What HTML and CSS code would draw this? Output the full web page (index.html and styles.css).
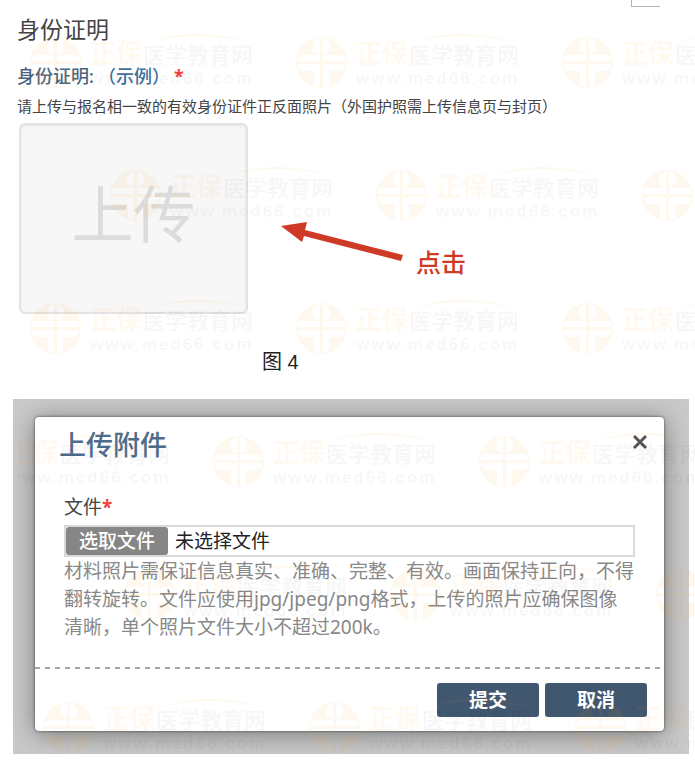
FILE: index.html
```
<!DOCTYPE html>
<html lang="zh-CN">
<head>
    <meta charset="UTF-8">
    <meta name="viewport" content="width=device-width, initial-scale=1.0">
    <title>身份证明</title>
    <link rel="stylesheet" href="styles.css">
</head>
<body>
    <!-- 水印图形 -->
    <svg class="defs" width="0" height="0" aria-hidden="true">
        <symbol id="mark" viewBox="0 0 266 60">
            <path class="mark-orange" fill-rule="evenodd" d="M25.500 5a25.500 25.500 0 1 0 0 51a25.500 25.500 0 1 0 0-51z
                M24 6C19 7 17 11 17 15c0 4 3 7 7 7z
                M27 6c5 1 7 5 7 9c0 4-3 7-7 7z
                M5 23H24v6H1c0-3 1-5 4-6z
                M46 23H27v6h23c0-3-1-5-4-6z
                M2 32H24v23c-4 0-6-1-6-3V39H7c-3 0-5-3-5-7z
                M49 32H27v23c4 0 6-1 6-3V39h11c3 0 5-3 5-7z"/>
            <path class="mark-orange" d="M114 11Q164-7 222 11Q164-3 114 11z"/>
            <text class="mark-orange mark-brand" x="60" y="31">正保</text>
            <text class="mark-grey mark-name" x="113" y="31">医学教育网</text>
            <text class="mark-grey mark-url" x="60" y="52">www.med66.com</text>
        </symbol>
    </svg>

    <section class="identity">
        <span class="crop-corner"></span>
        <h1>身份证明</h1>
        <p class="field-name">身份证明: <a href="#">（示例）</a> <b class="required">*</b></p>
        <p class="hint">请上传与报名相一致的有效身份证件正反面照片（外国护照需上传信息页与封页）</p>
        <div class="upload-row">
            <button type="button" class="upload-box">上传</button>
            <svg class="arrow" width="124" height="42" viewBox="0 0 124 42" aria-hidden="true">
                <path d="M1 6L27 2L25 10L123 35L121 41L24 16L22 22z"/>
            </svg>
            <span class="click-note">点击</span>
        </div>
        <p class="caption">图 4</p>

        <div class="watermark" aria-hidden="true">
            <div class="marks marks-a"><svg><use href="#mark"/></svg><svg><use href="#mark"/></svg><svg><use href="#mark"/></svg></div>
            <div class="marks marks-b"><svg><use href="#mark"/></svg><svg><use href="#mark"/></svg><svg><use href="#mark"/></svg></div>
            <div class="marks marks-a"><svg><use href="#mark"/></svg><svg><use href="#mark"/></svg><svg><use href="#mark"/></svg></div>
        </div>
    </section>

    <section class="attachment">
        <div class="backdrop">
            <form class="dialog">
                <div class="dialog-head">
                    <h2>上传附件</h2>
                    <button type="button" class="close" aria-label="关闭">
                        <svg width="16" height="16" viewBox="0 0 16 16"><path d="M2 2L14 14M14 2L2 14"/></svg>
                    </button>
                </div>
                <div class="dialog-body">
                    <label class="file-label" for="file">文件<b class="required">*</b></label>
                    <div class="file-field">
                        <button type="button" class="pick" onclick="document.getElementById('file').click()">选取文件</button>
                        <span>未选择文件</span>
                        <input type="file" id="file" accept=".jpg,.jpeg,.png" hidden>
                    </div>
                    <p class="help">材料照片需保证信息真实、准确、完整、有效。画面保持正向，不得<br>翻转旋转。文件应使用jpg/jpeg/png格式，上传的照片应确保图像<br>清晰，单个照片文件大小不超过200k。</p>
                </div>
                <div class="dialog-foot">
                    <button type="button">提交</button>
                    <button type="button">取消</button>
                </div>
            </form>
        </div>

        <div class="watermark" aria-hidden="true">
            <div class="marks marks-c"><svg><use href="#mark"/></svg><svg><use href="#mark"/></svg><svg><use href="#mark"/></svg></div>
            <div class="marks marks-d"><svg><use href="#mark"/></svg><svg><use href="#mark"/></svg><svg><use href="#mark"/></svg></div>
            <div class="marks marks-e"><svg><use href="#mark"/></svg><svg><use href="#mark"/></svg><svg><use href="#mark"/></svg></div>
        </div>
    </section>
</body>
</html>
```
FILE: styles.css
```
* {
    box-sizing: border-box;
}
body {
    font-family: "Noto Sans", "Noto Sans CJK SC", sans-serif;
    margin: 0;
    background-color: #fff;
    color: #444;
}
h1, h2, p {
    margin: 0;
    font-weight: normal;
}
button {
    font-family: inherit;
    padding: 0;
    border: none;
    cursor: pointer;
}
.defs {
    position: absolute;
}
.required {
    color: #f0443c;
}

/* 身份证明 */
.identity {
    position: relative;
    padding: 13px 17px 25px;
}
.crop-corner {
    position: absolute;
    top: 0;
    right: 35px;
    width: 29px;
    height: 7px;
    border-left: 1px solid #b4b4b4;
    border-bottom: 1px solid #b4b4b4;
}
h1 {
    font-size: 23px;
    line-height: 32px;
}
.field-name {
    display: flex;
    gap: 4px;
    margin-top: 16px;
    font-size: 18px;
    font-weight: 500;
    line-height: 30px;
    color: #4a6480;
}
.field-name a {
    color: #41709c;
    text-decoration: none;
}
.hint {
    margin-top: 5px;
    font-size: 15px;
    line-height: 20px;
}
.upload-row {
    display: flex;
    align-items: flex-start;
    margin: 7px 0 0 2px;
}
.upload-box {
    width: 229px;
    height: 191px;
    padding-bottom: 10px;
    border: 2px solid #e3e3e3;
    border-radius: 6px;
    background-color: #f7f7f7;
    box-shadow: inset 0 1px 3px rgba(0, 0, 0, 0.08);
    color: #dcdcdc;
    font-size: 62px;
    line-height: 62px;
}
.arrow {
    margin: 97px 12px 0 32px;
    fill: #cf3a27;
}
.click-note {
    margin-top: 124px;
    color: #cf3a27;
    font-size: 25px;
    font-weight: 500;
    line-height: 30px;
}
.caption {
    margin: 36px 0 0 245px;
    color: #222;
    font-family: "Liberation Sans", "Noto Sans CJK SC", sans-serif;
    font-size: 20px;
    line-height: 24px;
}

/* 上传附件 */
.attachment {
    position: relative;
    padding: 0 6px 8px 13px;
}
.backdrop {
    padding: 18px 25px 23px 22px;
    background-color: #c9c9c9;
    overflow: hidden;
}
.dialog {
    border-radius: 4px;
    background-color: #fff;
    box-shadow: 0 0 3px rgba(0, 0, 0, 0.6), 0 3px 24px rgba(0, 0, 0, 0.4);
}
.dialog-head {
    display: flex;
    justify-content: space-between;
    align-items: flex-start;
    padding: 10px 16px 0 24px;
}
h2 {
    color: #4e6c8c;
    font-size: 27px;
    font-weight: 500;
    line-height: 36px;
}
.close {
    display: flex;
    margin-top: 7px;
    background: none;
}
.close path {
    fill: none;
    stroke: #555;
    stroke-width: 3;
}
.dialog-body {
    padding: 31px 29px 26px;
}
.file-label {
    display: block;
    font-size: 19px;
    line-height: 26px;
}
.file-field {
    display: flex;
    align-items: center;
    gap: 7px;
    height: 32px;
    margin-top: 5px;
    border: 2px solid #d9d9d9;
    color: #222;
    font-size: 19px;
    line-height: 28px;
}
.pick {
    width: 102px;
    height: 28px;
    border-radius: 3px;
    background-color: #868686;
    color: #fff;
    font-size: 19px;
    font-weight: 500;
    line-height: 28px;
}
.help {
    color: #888;
    font-size: 19px;
    line-height: 28px;
    white-space: nowrap;
}
.dialog-foot {
    display: flex;
    justify-content: flex-end;
    gap: 6px;
    padding: 16px 17px 14px;
    background: repeating-linear-gradient(90deg, #a6a6a6 0 5px, #fff 5px 10px) top / 100% 2px no-repeat;
}
.dialog-foot button {
    width: 102px;
    height: 34px;
    border-radius: 3px;
    background-color: #41576f;
    color: #fff;
    font-size: 19px;
    font-weight: bold;
    line-height: 34px;
}

/* 水印 */
.watermark {
    position: absolute;
    top: 32px;
    left: 18px;
    right: 0;
    overflow: hidden;
    pointer-events: none;
}
.marks {
    display: flex;
    height: 133px;
}
.marks:last-child {
    height: 60px;
}
.marks svg {
    flex: none;
    width: 266px;
    height: 60px;
}
.marks-a {
    margin-left: 12px;
}
.marks-b {
    margin-left: 92px;
}
.marks-c {
    margin-left: -71px;
}
.marks-d {
    margin-left: 106px;
}
.marks-e {
    margin-left: 25px;
}
.mark-orange {
    fill: rgba(255, 160, 30, 0.07);
}
.mark-grey {
    fill: rgba(0, 0, 0, 0.05);
}
.mark-brand {
    font-family: "Noto Sans CJK SC", sans-serif;
    font-size: 26px;
    font-weight: bold;
}
.mark-name {
    font-family: "Noto Sans CJK SC", sans-serif;
    font-size: 22px;
    font-weight: bold;
}
.mark-url {
    font-family: "Liberation Sans", sans-serif;
    font-size: 17px;
    font-weight: bold;
    letter-spacing: 2px;
}
```
